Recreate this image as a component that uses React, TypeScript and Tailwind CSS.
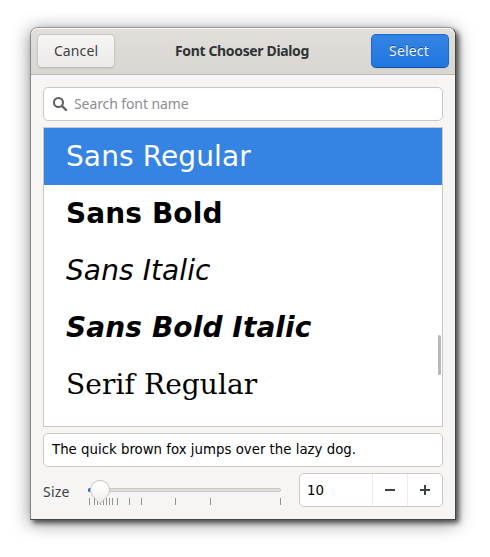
import React from "react";

const ui = "font-['Noto_Sans','Open_Sans',sans-serif]";

const fonts = [
  { name: "Sans Regular", cls: "bg-[#3584e4] text-white" },
  { name: "Sans Bold", cls: "font-bold text-black" },
  { name: "Sans Italic", cls: "italic text-black" },
  { name: "Sans Bold Italic", cls: "font-bold italic text-black" },
  { name: "Serif Regular", cls: "text-black", serif: true },
];

const ticks = [89, 94, 97, 100, 103, 106, 109, 112, 117, 129, 141, 175, 210, 280];

function Header() {
  return (
    <header className="flex h-[47px] items-start justify-between rounded-t-[7px] border-b border-[#bfb8b1] bg-linear-to-b from-[#e1dedb] to-[#dad6d2] px-[6px] pt-[6px] shadow-[inset_0_1px_#f9f8f8]">
      <button className="flex h-[34px] w-[78px] items-center justify-center rounded-[5px] border border-[#cdc7c2] border-b-[#bfb8b1] bg-linear-to-b from-[#f6f5f4] to-[#edebe9] pb-px shadow-[0_1px_2px_rgba(0,0,0,0.07)]">
        <span className="text-[14px] tracking-[0.1px] text-[#3c4244]">Cancel</span>
      </button>
      <h1 className="flex h-[33px] items-center pr-[2px] text-[14px] font-bold tracking-[-0.35px] whitespace-nowrap text-[#2e3436]">
        Font Chooser Dialog
      </h1>
      <button className="flex h-[34px] w-[78px] items-center justify-center rounded-[5px] border border-[#1b6acb] border-b-[#15539e] bg-linear-to-b from-[#3584e4] to-[#1f76e1] pr-[2px] pb-px shadow-[0_1px_2px_rgba(0,0,0,0.07)]">
        <span className="text-[14px] tracking-[0.15px] text-[#eef4fc] [text-shadow:0_-1px_rgba(0,0,0,0.4)]">Select</span>
      </button>
    </header>
  );
}

function SizeSlider() {
  return (
    <svg className="ml-[10px] h-[34px] w-[212px] shrink-0" viewBox="80 473 212 34">
      <defs>
        <linearGradient id="knob" x1="0" y1="0" x2="0" y2="1">
          <stop offset="0.2" stopColor="#fff" />
          <stop offset="1" stopColor="#edebe9" />
        </linearGradient>
      </defs>
      {ticks.map((x) => (
        <rect key={x} x={x} y="498" width="1" height="7" fill="#929595" />
      ))}
      <rect x="88.5" y="488.5" width="192" height="3" rx="1.5" fill="#e1dedb" stroke="#cdc7c2" />
      <rect x="88" y="488" width="12" height="4" rx="1.5" fill="#2a73d1" />
      <path
        d="M100 480.5a9.5 9.5 0 0 1 9.5 9.5c0 3.5-1.8 6-4.2 8.3L100 503.5l-5.3-5.2c-2.4-2.3-4.2-4.8-4.2-8.3a9.5 9.5 0 0 1 9.5-9.5z"
        fill="url(#knob)"
        stroke="#c8c2bd"
      />
    </svg>
  );
}

export default function App() {
  return (
    <div className={`h-[557px] w-[490px] overflow-hidden bg-white pt-[27px] pl-[30px] ${ui}`}>
      <div className="h-[493px] w-[426px] rounded-t-[8px] border border-t-[#989898] border-r-[#454545] border-b-[#454545] border-l-[#858585] bg-[#f6f5f4] shadow-[3px_3px_5px_rgba(0,0,0,0.6),0_3px_18px_1px_rgba(0,0,0,0.4)]">
        <Header />
        <main className="flex flex-col gap-[6px] px-[12px] pt-[12px]">
          <div className="flex h-[34px] items-center rounded-[5px] border border-[#cdc7c2] bg-white pl-[8px]">
            <svg className="h-[16px] w-[16px]" viewBox="0 0 16 16" fill="none" stroke="#5b5f60">
              <circle cx="6.5" cy="6.5" r="4.5" strokeWidth="2" />
              <path d="M10 10l4 4" strokeWidth="2.4" strokeLinecap="round" />
            </svg>
            <span className="ml-[6px] pb-[2px] text-[14px] tracking-[-0.1px] text-[#8b8e8f]">Search font name</span>
          </div>

          <div className="relative h-[300px] overflow-hidden border border-[#cdc7c2] bg-white">
            {fonts.map((f) => (
              <div
                key={f.name}
                className={`flex h-[57px] items-center pl-[22px] text-[28px] tracking-[0.1px] whitespace-nowrap ${
                  f.serif ? "font-['DejaVu_Serif',serif]" : "font-['DejaVu_Sans',sans-serif]"
                } ${f.cls}`}
              >
                {f.name}
              </div>
            ))}
            <div className="absolute top-[207px] right-[1px] h-[40px] w-[3px] rounded-full bg-[#b7b9b9]" />
          </div>

          <div className="flex h-[34px] items-center rounded-[5px] border border-[#cdc7c2] bg-white pb-px pl-[8px] font-['DejaVu_Sans',sans-serif] text-[13.33px] whitespace-nowrap text-black">
            The quick brown fox jumps over the lazy dog.
          </div>

          <div className="flex h-[34px] items-center">
            <span className="w-[27px] shrink-0 pt-[3px] text-[14px] tracking-[0.2px] text-[#3c4244]">Size</span>
            <SizeSlider />
            <div className="ml-[7px] flex h-[34px] w-[144px] shrink-0 rounded-[5px] border border-[#cdc7c2] bg-white">
              <span className="flex w-[72px] items-center pt-px pl-[7px] font-['DejaVu_Sans',sans-serif] text-[13.33px] text-black">10</span>
              <button className="flex w-[35px] items-center justify-center border-l border-[#edebe9]">
                <svg width="10" height="10" viewBox="0 0 10 10">
                  <path d="M0 4h10v2H0z" fill="#3d4345" />
                </svg>
              </button>
              <button className="flex w-[35px] items-center justify-center border-l border-[#edebe9]">
                <svg width="10" height="10" viewBox="0 0 10 10">
                  <path d="M4 0h2v4h4v2H6v4H4V6H0V4h4z" fill="#3d4345" />
                </svg>
              </button>
            </div>
          </div>
        </main>
      </div>
    </div>
  );
}
